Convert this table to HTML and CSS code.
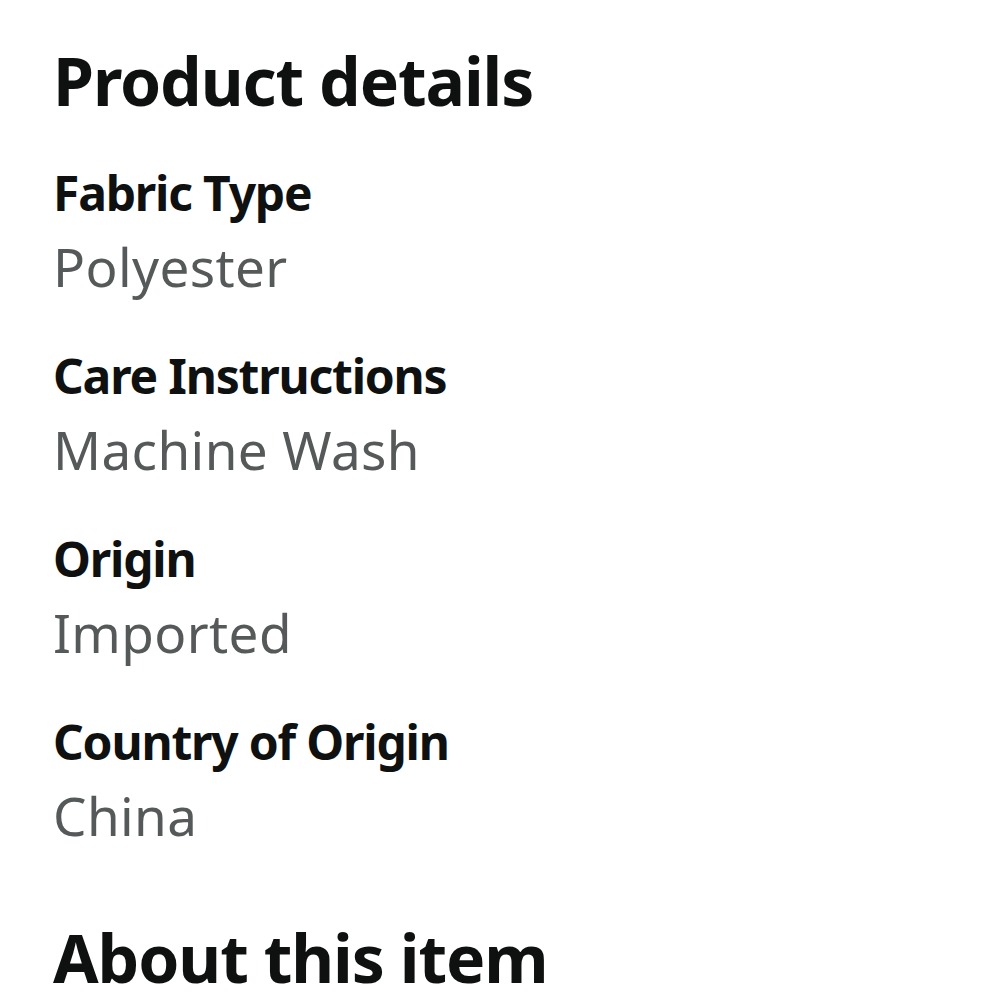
FILE: index.html
```html
<!DOCTYPE html>
<html lang="en">
<head>
    <meta charset="UTF-8">
    <meta name="viewport" content="width=device-width, initial-scale=1.0">
    <title>Product details</title>
    <link rel="stylesheet" href="styles.css">
</head>
<body>
    <div class="page">
        <h2 class="section-title">Product details</h2>
        <div class="details">
            <div class="detail">
                <span class="detail-label">Fabric Type</span>
                <span class="detail-value">Polyester</span>
            </div>
            <div class="detail">
                <span class="detail-label">Care Instructions</span>
                <span class="detail-value">Machine Wash</span>
            </div>
            <div class="detail">
                <span class="detail-label">Origin</span>
                <span class="detail-value">Imported</span>
            </div>
            <div class="detail">
                <span class="detail-label">Country of Origin</span>
                <span class="detail-value">China</span>
            </div>
        </div>
        <h2 class="section-title about">About this item</h2>
    </div>
</body>
</html>
```

FILE: styles.css
```css
* {
    margin: 0;
    padding: 0;
    box-sizing: border-box;
}

body {
    font-family: "Noto Sans", Arial, sans-serif;
    background-color: #fff;
    color: #0f1111;
}

.page {
    padding: 40px 53px 0;
}

.section-title {
    font-size: 66px;
    line-height: 80px;
    font-weight: 700;
    letter-spacing: -1.1px;
}

.details {
    display: flex;
    flex-direction: column;
    gap: 35px;
    margin-top: 43px;
}

.detail {
    display: flex;
    flex-direction: column;
}

.detail-label {
    font-size: 48px;
    line-height: 60px;
    font-weight: 700;
    letter-spacing: -1.2px;
}

.detail-value {
    font-size: 53px;
    line-height: 88px;
    color: #565959;
    letter-spacing: 0.4px;
}

.about {
    margin-top: 57px;
}
```
